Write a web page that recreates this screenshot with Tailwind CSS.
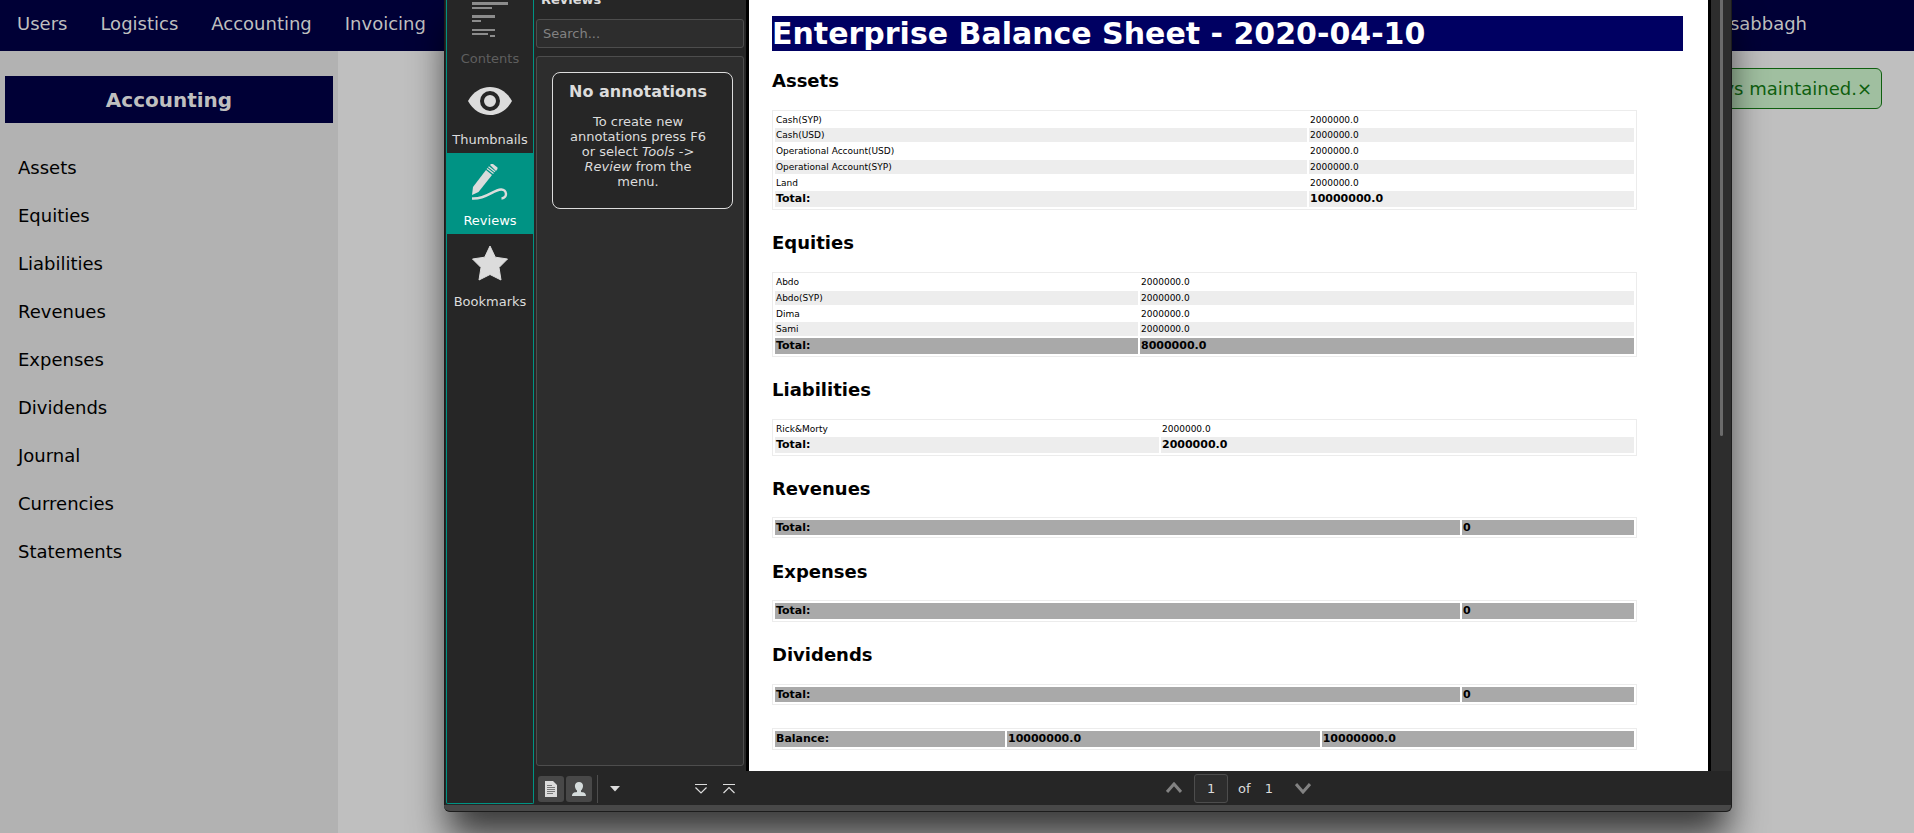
<!DOCTYPE html>
<html lang="en">
<head>
<meta charset="utf-8">
<title>Accounting</title>
<script src="https://cdn.jsdelivr.net/npm/@tailwindcss/browser@4"></script>
</head>
<body class="relative h-screen overflow-hidden bg-[#bfbfbf] font-['DejaVu_Sans',sans-serif] text-[18px] leading-[22px] text-black flex flex-col">

<header class="flex h-[51px] shrink-0 items-center justify-between bg-[#000036] pb-[3px] text-[#bfbfbf]">
  <nav class="flex gap-[33px] pl-[17px]" aria-label="Main">
    <a href="#">Users</a>
    <a href="#">Logistics</a>
    <a href="#">Accounting</a>
    <a href="#">Invoicing</a>
  </nav>
  <a href="#" class="mr-[107px]">sabbagh</a>
</header>

<div class="flex flex-1">
  <aside class="w-[338px] shrink-0 bg-[#b2b2b2] px-[5px] pt-[25px]">
    <h2 class="flex h-[47px] items-center justify-center bg-[#000036] text-[20px] font-bold text-[#bfbfbf]">Accounting</h2>
    <nav class="mt-[21px] flex flex-col" aria-label="Accounting">
      <a href="#" class="px-[13px] py-[13px]">Assets</a>
      <a href="#" class="px-[13px] py-[13px]">Equities</a>
      <a href="#" class="px-[13px] py-[13px]">Liabilities</a>
      <a href="#" class="px-[13px] py-[13px]">Revenues</a>
      <a href="#" class="px-[13px] py-[13px]">Expenses</a>
      <a href="#" class="px-[13px] py-[13px]">Dividends</a>
      <a href="#" class="px-[13px] py-[13px]">Journal</a>
      <a href="#" class="px-[13px] py-[13px]">Currencies</a>
      <a href="#" class="px-[13px] py-[13px]">Statements</a>
    </nav>
  </aside>
  <main class="flex flex-1 items-start justify-end pt-[17px] pr-8">
    <div class="flex h-[41px] w-[240px] items-center justify-end rounded-[6px] border border-[#0f5f0f] bg-[#a0bfa0] pr-[9px] text-[#0f5f0f]" role="status">
      <span>ys maintained.</span><button type="button" aria-label="Close">×</button>
    </div>
  </main>
</div>

<!-- Document viewer window -->
<section class="absolute -top-[9px] right-[182px] bottom-[21px] left-[444px] flex flex-col overflow-hidden rounded-b-[6px] border-r border-b border-[#1c1c1c] bg-[#262626] text-[13px] leading-[15px] text-[#dcdcdc] shadow-[0_29px_37px_-4px_rgba(0,0,0,0.7)]" aria-label="Document viewer">
  <div class="flex min-h-0 flex-1 border-l border-[#1c1c1c] pl-[1px]">
    <div class="mb-[1px] flex w-[88px] shrink-0 flex-col rounded-b-[2px] border-x border-b border-[#009384]">
      <button type="button" disabled class="flex h-[81px] flex-col items-center pt-[11px] text-[#5f5f5f]">
        <svg class="h-9 w-9" viewBox="0 0 36 36" fill="#8c8c8c"><path d="M0 0h36v3H0zM0 5h20v2H0zM0 13h23v3H0zM0 18h9v2H0zM0 27h23v2H0zM0 31h16v2H0zM18 33h5v2h-5z"/></svg>
        <span class="mt-[13px]">Contents</span>
      </button>
      <button type="button" class="flex h-[81px] flex-col items-center pt-[11px]">
        <svg class="h-9 w-11" viewBox="0 0 44 36"><path d="M0 18C5 9 13 4 22 4s17 5 22 14c-5 9-13 14-22 14S5 27 0 18z" fill="#dcdcdc"/><circle cx="22" cy="18" r="8" fill="none" stroke="#262626" stroke-width="4"/></svg>
        <span class="mt-[13px]">Thumbnails</span>
      </button>
      <button type="button" aria-pressed="true" class="flex h-[81px] flex-col items-center bg-[#009384] pt-[11px] text-white">
        <svg class="h-9 w-9" viewBox="0 0 36 36"><path d="M1 23 14 6l6 5L6.500 28 0 31z" fill="#dcdcdc"/><path d="m15 4.500 6.500 5M16.500 2.800l6.500 5" stroke="#dcdcdc" stroke-width="1.300"/><path d="m18 1 1-1h2l4.500 3.500V5L24 7z" fill="#dcdcdc"/><path d="M0 34.500C14 35.500 21 26 29 25.500c6-.3 7 8.500.5 9" fill="none" stroke="#dcdcdc" stroke-width="2.400"/></svg>
        <span class="mt-[13px]">Reviews</span>
      </button>
      <button type="button" class="flex h-[81px] flex-col items-center pt-[11px]">
        <svg class="h-9 w-9" viewBox="0 0 36 36"><path d="m18 1 5.300 11.200L35.500 14l-8.500 8.500L29 35l-11-5.500L7 35l2-12.500L.5 14l12.200-1.800z" fill="#dcdcdc" stroke="#dcdcdc" stroke-linejoin="round"/></svg>
        <span class="mt-[13px]">Bookmarks</span>
      </button>
    </div>

    <div class="flex min-w-0 flex-1 flex-col">
      <div class="flex min-h-0 flex-1">
        <div class="flex w-[212px] shrink-0 flex-col px-[2px] pb-[5px]">
          <h2 class="pt-[1px] pl-[5px] leading-[15px] font-bold">Reviews</h2>
          <input type="search" aria-label="Search reviews" placeholder="Search..." class="mt-3 h-[29px] w-[208px] rounded-[3px] border border-[#4d4d4d] bg-[#2d2d2d] px-[6px] placeholder:text-[#828282]">
          <div class="mt-2 w-[208px] flex-1 rounded-[3px] border border-[#4d4d4d] bg-[#2d2d2d] px-[15px] pt-[15px] pr-[10px]">
            <div class="h-[137px] w-[181px] rounded-[8px] border border-[#dcdcdc] bg-[#262626] pt-[10px] pr-[21px] pl-3 text-center">
              <h3 class="text-[16px] leading-[18px] font-bold whitespace-nowrap">No annotations</h3>
              <p class="mt-[13px]">To create new annotations press F6 or select <em>Tools</em> -&gt; <em>Review</em> from the menu.</p>
            </div>
          </div>
        </div>

        <article class="flex-1 border-x-3 border-black bg-white pt-[25px] pr-[25px] pl-[23px] text-[9px] leading-[12px] text-black">
          <h1 class="bg-[#000062] text-[30px] leading-[35px] font-bold whitespace-nowrap text-white">Enterprise Balance Sheet - 2020-04-10</h1>

          <h2 class="mt-[19px] mb-[18px] text-[18px] leading-[22px] font-bold">Assets</h2>
          <table class="w-[95%] table-fixed border-separate border-spacing-[2px] border border-[#ececec] [&_td]:p-0 [&_td]:pl-[1px]">
            <tr class="h-[13px]"><td class="w-[532px]">Cash(SYP)</td><td>2000000.0</td></tr>
            <tr class="h-[14px] bg-[#ededed]"><td>Cash(USD)</td><td>2000000.0</td></tr>
            <tr class="h-[14px]"><td>Operational Account(USD)</td><td>2000000.0</td></tr>
            <tr class="h-[14px] bg-[#ededed]"><td>Operational Account(SYP)</td><td>2000000.0</td></tr>
            <tr class="h-[13px]"><td>Land</td><td>2000000.0</td></tr>
            <tr class="h-[16px] bg-[#ededed] text-[11px] leading-[16px] font-bold"><td>Total:</td><td>10000000.0</td></tr>
          </table>

          <h2 class="mt-[22px] mb-[18px] text-[18px] leading-[22px] font-bold">Equities</h2>
          <table class="w-[95%] table-fixed border-separate border-spacing-[2px] border border-[#ececec] [&_td]:p-0 [&_td]:pl-[1px]">
            <tr class="h-[14px]"><td class="w-[363px]">Abdo</td><td>2000000.0</td></tr>
            <tr class="h-[14px] bg-[#ededed]"><td>Abdo(SYP)</td><td>2000000.0</td></tr>
            <tr class="h-[13px]"><td>Dima</td><td>2000000.0</td></tr>
            <tr class="h-[14px] bg-[#ededed]"><td>Sami</td><td>2000000.0</td></tr>
            <tr class="h-[16px] bg-[#a9a9a9] text-[11px] leading-[16px] font-bold"><td>Total:</td><td>8000000.0</td></tr>
          </table>

          <h2 class="mt-[22px] mb-[18px] text-[18px] leading-[22px] font-bold">Liabilities</h2>
          <table class="w-[95%] table-fixed border-separate border-spacing-[2px] border border-[#ececec] [&_td]:p-0 [&_td]:pl-[1px]">
            <tr class="h-[13px]"><td class="w-[384px]">Rick&amp;Morty</td><td>2000000.0</td></tr>
            <tr class="h-[16px] bg-[#ededed] text-[11px] leading-[16px] font-bold"><td>Total:</td><td>2000000.0</td></tr>
          </table>

          <h2 class="mt-[22px] mb-[17px] text-[18px] leading-[22px] font-bold">Revenues</h2>
          <table class="w-[95%] table-fixed border-separate border-spacing-[2px] border border-[#ececec] text-[11px] leading-[15px] font-bold [&_td]:p-0 [&_td]:pl-[1px]">
            <tr class="h-[15px] bg-[#a9a9a9]"><td class="w-[685px]">Total:</td><td>0</td></tr>
          </table>

          <h2 class="mt-[23px] mb-[17px] text-[18px] leading-[22px] font-bold">Expenses</h2>
          <table class="w-[95%] table-fixed border-separate border-spacing-[2px] border border-[#ececec] text-[11px] leading-[16px] font-bold [&_td]:p-0 [&_td]:pl-[1px]">
            <tr class="h-[16px] bg-[#a9a9a9]"><td class="w-[685px]">Total:</td><td>0</td></tr>
          </table>

          <h2 class="mt-[22px] mb-[18px] text-[18px] leading-[22px] font-bold">Dividends</h2>
          <table class="w-[95%] table-fixed border-separate border-spacing-[2px] border border-[#ececec] text-[11px] leading-[15px] font-bold [&_td]:p-0 [&_td]:pl-[1px]">
            <tr class="h-[15px] bg-[#a9a9a9]"><td class="w-[685px]">Total:</td><td>0</td></tr>
          </table>

          <table class="mt-[23px] w-[95%] table-fixed border-separate border-spacing-[2px] border border-[#ececec] text-[11px] leading-[16px] font-bold [&_td]:p-0 [&_td]:pl-[1px]">
            <tr class="h-[16px] bg-[#a9a9a9]"><td class="w-[230px]">Balance:</td><td>10000000.0</td><td>10000000.0</td></tr>
          </table>
        </article>

        <div class="flex w-5 shrink-0 justify-center bg-[#2d2d2d]">
          <div class="h-[445px] w-[3px] rounded-b-full bg-[#6b6b6b]"></div>
        </div>
      </div>

      <div class="flex h-[34px] shrink-0 items-center">
        <div class="flex w-[212px] shrink-0 items-center pt-[1px] pl-1">
          <button type="button" aria-label="Group by page" class="flex h-[26px] w-[26px] items-center justify-center rounded-[3px] bg-[#484848]">
            <svg class="h-4 w-3" viewBox="0 0 12 16"><path d="M0 0h8l4 4v12H0z" fill="#dcdcdc"/><path d="M2 4.500h5M2 6.500h8M2 8.500h8M2 10.500h8M2 12.500h6" stroke="#777"/></svg>
          </button>
          <button type="button" aria-label="Group by author" class="ml-[2px] flex h-[26px] w-[26px] items-center justify-center rounded-[3px] bg-[#484848]">
            <svg class="h-[14px] w-[14px]" viewBox="0 0 14 14" fill="#d5dcdc"><path d="M7 0c5 0 5 6 2 8.500V10c3 .3 5 1 5 4H0c0-3 2-3.700 5-4V8.500C2 6 2 0 7 0z"/></svg>
          </button>
          <span class="ml-[5px] h-7 w-px bg-[#4d4d4d]"></span>
          <button type="button" aria-label="More options" class="ml-3"><svg class="h-[6px] w-[10px]" viewBox="0 0 10 6"><path d="M0 0h10L5 5.500z" fill="#dcdcdc"/></svg></button>
          <button type="button" aria-label="Expand all" class="ml-auto"><svg class="h-3 w-3" viewBox="0 0 12 12" fill="none" stroke="#dcdcdc" stroke-width="1.200"><path d="M0 1.500h12M.5 4.500 6 10l5.500-5.500"/></svg></button>
          <button type="button" aria-label="Collapse all" class="mr-[11px] ml-4"><svg class="h-3 w-3" viewBox="0 0 12 12" fill="none" stroke="#dcdcdc" stroke-width="1.200"><path d="M0 1.500h12M.5 10 6 4.500l5.500 5.500"/></svg></button>
        </div>
        <div class="flex h-full flex-1 items-center justify-center">
          <button type="button" aria-label="Previous page"><svg class="h-3 w-4" viewBox="0 0 16 12" fill="none" stroke="#828282" stroke-width="3"><path d="m1 10 7-8 7 8"/></svg></button>
          <input type="text" aria-label="Page number" value="1" class="ml-3 h-[29px] w-[34px] rounded-[3px] border border-[#4d4d4d] bg-[#2d2d2d] text-center">
          <span class="ml-[10px]">of</span>
          <span class="mr-[22px] ml-[14px]">1</span>
          <button type="button" aria-label="Next page"><svg class="h-3 w-4" viewBox="0 0 16 12" fill="none" stroke="#828282" stroke-width="3"><path d="m1 2 7 8 7-8"/></svg></button>
        </div>
      </div>
    </div>
  </div>
  <div class="h-[6px] shrink-0 bg-[#484848]"></div>
</section>
</body>
</html>
